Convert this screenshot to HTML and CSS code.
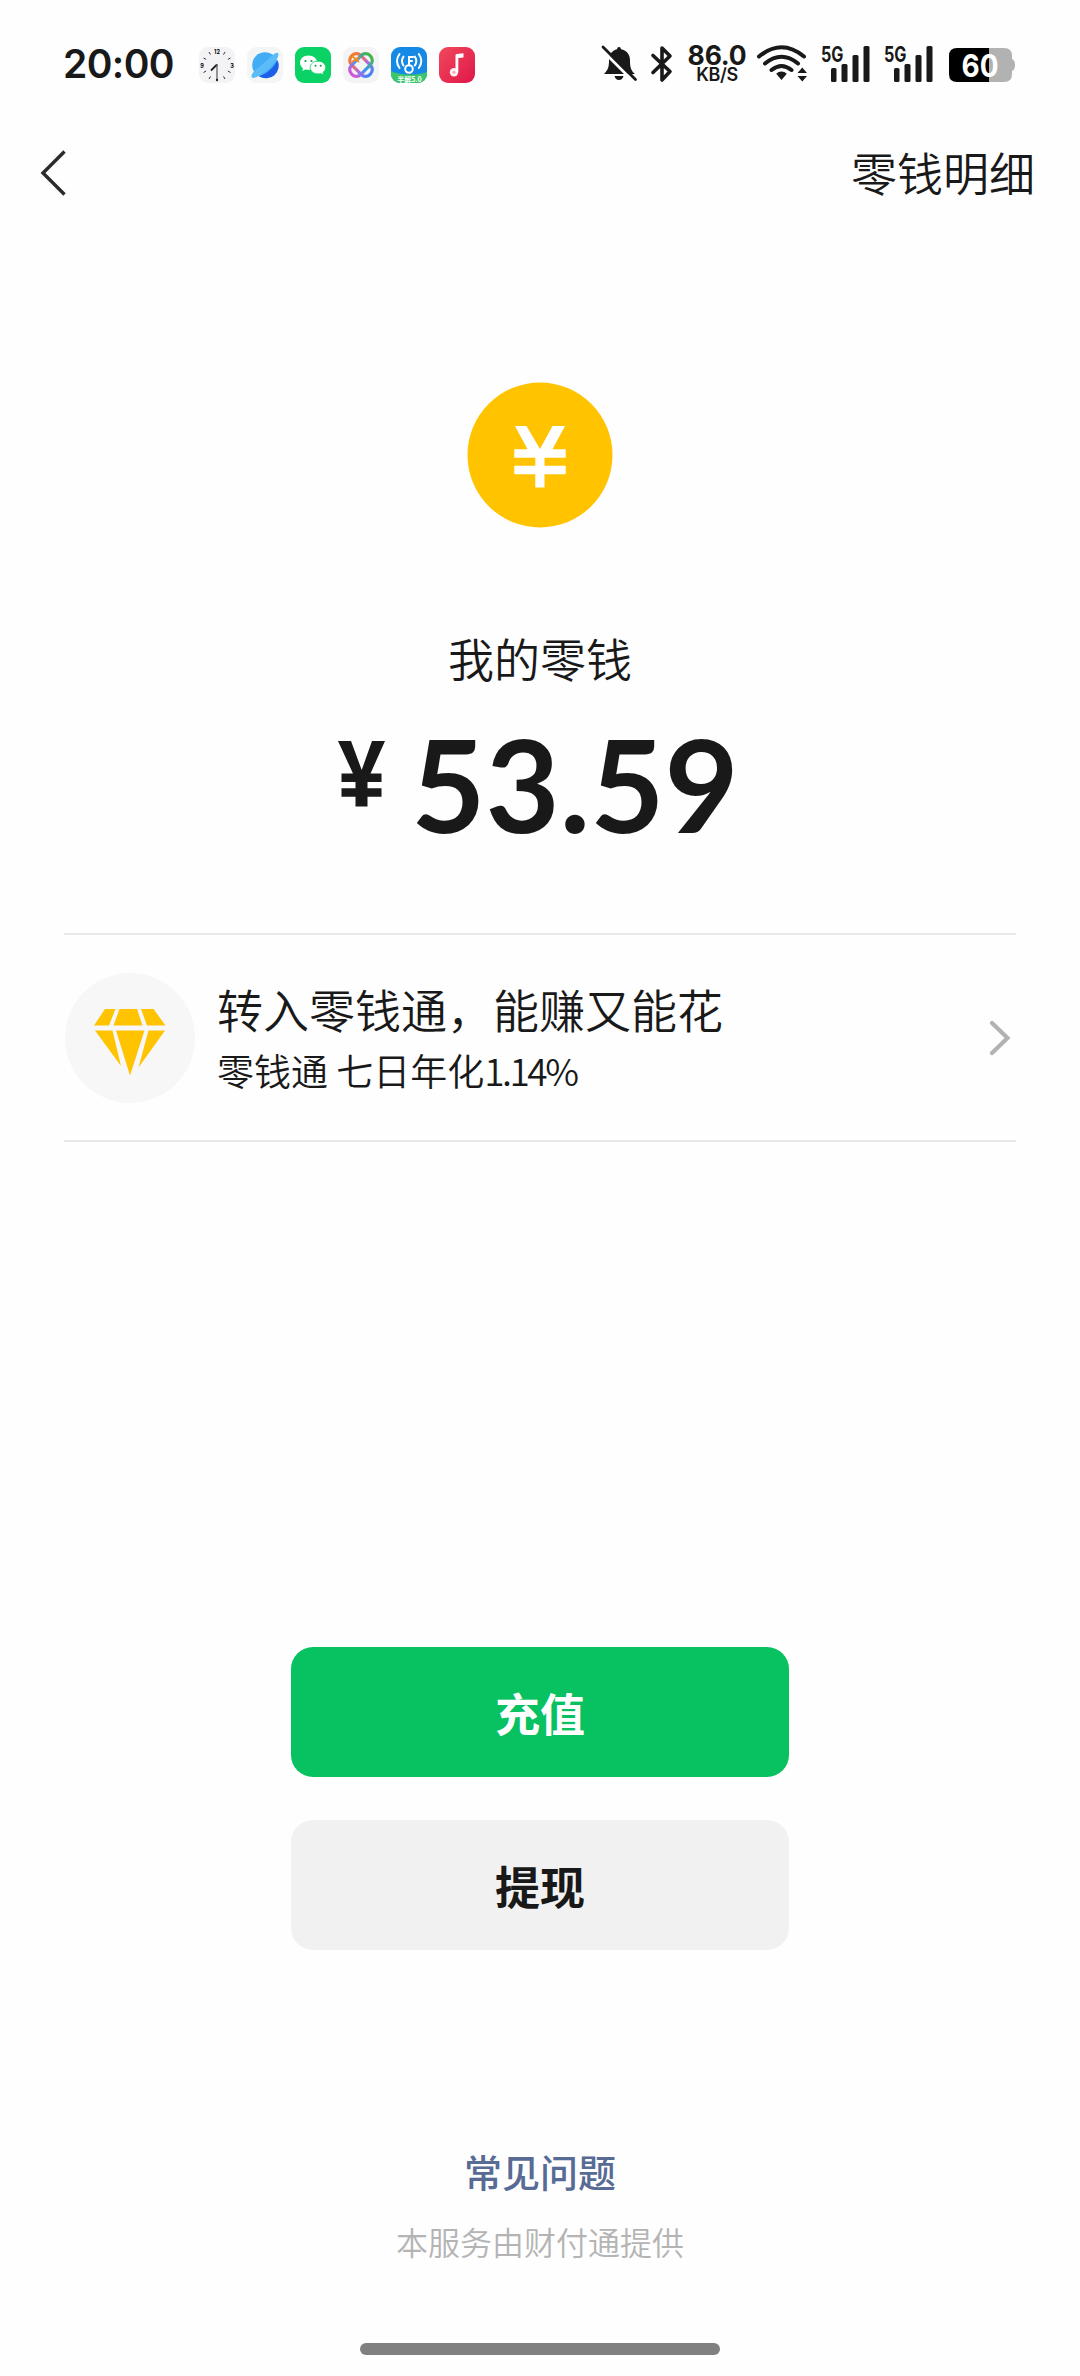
FILE: index.html
```html
<!DOCTYPE html>
<html lang="zh-CN">
<head>
<meta charset="utf-8">
<title>零钱</title>
<link rel="stylesheet" href="styles.css">
</head>
<body>
<div class="screen">
  <header class="status">
    <span class="time">20:00</span>
    <div class="apps">
      <svg class="app" viewBox="0 0 36 36">
        <rect width="36" height="36" rx="9" fill="#f3f3f6"/>
        <g stroke="#333" stroke-width="1"><path d="M10 5l1.500 2.600M26 5l-1.500 2.600M4.500 11l2.600 1.400M31.500 11l-2.600 1.400M4.500 25.500l2.600-1.500M31.500 25.500l-2.600-1.500M10 32l1.500-2.600M26 32l-1.500-2.600"/></g>
        <g class="dial"><text x="18" y="6.500">12</text><text x="33" y="20.500">3</text><text x="3" y="20.500">9</text></g>
        <path d="M18 17.500l-6 6" stroke="#222" stroke-width="1.800"/><path d="M18 17v16" stroke="#556" stroke-width="1.200"/><circle cx="18" cy="33" r="1.200" fill="#222"/>
      </svg>
      <svg class="app" viewBox="0 0 36 36">
        <rect width="36" height="36" rx="9" fill="#f4f5f5"/>
        <circle cx="18" cy="18" r="12.800" fill="#42adf5"/>
        <path d="M30.500 13A12.800 12.800 0 0 1 12 29.300C20 26.500 27 20.500 30.500 13z" fill="#1d5fe6"/>
        <path d="M26 8c3-3 5.500-3 5.500-.5 0 5-9 15.500-18 20.500C8 31 5 32 4.500 29.500 4.200 28 5.500 26 7.500 24z" fill="#5bbcf7"/>
      </svg>
      <svg class="app" viewBox="0 0 36 36">
        <rect width="36" height="36" rx="9" fill="#0bd264"/>
        <path d="M13.500 8.500c-5 0-8.500 3.200-8.500 7.200 0 2.200 1.200 4.200 3 5.500L7.300 24l3.200-1.600c1 .3 2 .4 3 .4 5 0 8.700-3.100 8.700-7.100s-3.700-7.200-8.700-7.200z" fill="#fff"/>
        <path d="M23 14.200c-4.600 0-7.900 2.800-7.900 6.300s3.300 6.400 7.900 6.400c.9 0 1.800-.1 2.600-.4l2.900 1.500-.6-2.600c1.700-1.200 2.800-2.900 2.800-4.900 0-3.500-3.200-6.300-7.700-6.300z" fill="#fff" stroke="#0bd264" stroke-width=".8"/>
        <g fill="#0b9d4e"><circle cx="10.500" cy="14" r="1.100"/><circle cx="16.500" cy="14" r="1.100"/><circle cx="20.500" cy="18.800" r="1"/><circle cx="25.700" cy="18.800" r="1"/></g>
      </svg>
      <svg class="app" viewBox="0 0 36 36">
        <defs><linearGradient id="knot" x1="0" y1="0" x2="1" y2="0"><stop offset="0" stop-color="#f07c2b"/><stop offset=".35" stop-color="#ef6a74"/><stop offset=".65" stop-color="#a56be8"/><stop offset="1" stop-color="#4285f4"/></linearGradient>
        <linearGradient id="loop" x1="0" y1="0" x2="1" y2="0"><stop offset="0" stop-color="#d755d7"/><stop offset=".5" stop-color="#3c98f0"/><stop offset="1" stop-color="#43b649"/></linearGradient></defs>
        <rect width="36" height="36" rx="9" fill="#f4f4f5"/>
        <g fill="none" stroke-width="3.200"><rect x="5" y="11.500" width="26" height="13" rx="6" transform="rotate(45 18 18)" stroke="url(#knot)"/><rect x="5" y="11.500" width="26" height="13" rx="6" transform="rotate(-45 18 18)" stroke="url(#loop)"/></g>
        <path d="M9 9l7 6M9 15l7-5" stroke="#f58b27" stroke-width="2"/>
      </svg>
      <svg class="app" viewBox="0 0 36 36">
        <defs><clipPath id="tile"><rect width="36" height="36" rx="9"/></clipPath></defs>
        <g clip-path="url(#tile)"><rect width="36" height="36" fill="#1489e6"/><path d="M0 24c7 4 25 5 36 1v11H0z" fill="#3bc66c"/></g>
        <g fill="none" stroke="#fff" stroke-width="2" stroke-linecap="round"><circle cx="18" cy="22" r="3.800"/><path d="M18 18V10h4M18 14h3M12.500 9.500q-3 4.500 0 9M8.500 7q-5 7 0 14M23.800 9.500q3 4.500 0 9M27.800 7q5 7 0 14"/></g>
        <text class="badge" x="18.500" y="34.500">半解5.0</text>
      </svg>
      <svg class="app" viewBox="0 0 36 36">
        <defs><linearGradient id="red" x1="0" y1="0" x2="1" y2="1"><stop offset="0" stop-color="#f1485a"/><stop offset="1" stop-color="#df174b"/></linearGradient></defs>
        <rect width="36" height="36" rx="9" fill="url(#red)"/>
        <circle cx="15" cy="25.300" r="4.200" fill="#fff0f2"/><path d="M16.500 25V8.200q0-1 1-1.300l7-.7v4.300l-5.200.6V25z" fill="#fff"/><circle cx="15" cy="25.300" r="1.500" fill="#f4a5b4"/>
      </svg>
    </div>
    <div class="system">
      <svg class="bell" viewBox="0 0 36 38" fill="#191919">
        <path d="M18 2q2 0 2 2.200c6 1.200 9 5.500 9 11.300 0 7 1 10 5 13.500H3c4-4 5-7 5-13.500C8 9.500 11 5.400 16 4.200Q16 2 18 2z"/><path d="M13.500 31h9q-1 4-4.500 4t-4.500-4z"/>
        <path d="M0 4l33 33" stroke="#fefefe" stroke-width="3"/><path d="M2 2l32.500 32.500" stroke="#191919" stroke-width="2.800" stroke-linecap="round"/>
      </svg>
      <svg class="bluetooth" viewBox="0 0 22 36"><path d="M2 9.500l17 16L11 34V2l8 8L2 26.500" fill="none" stroke="#191919" stroke-width="3.600" stroke-linejoin="round" stroke-linecap="round"/></svg>
      <div class="speed"><span class="rate">86.0</span><span class="unit">KB/S</span></div>
      <svg class="wifi" viewBox="0 0 50 38">
        <g fill="none" stroke="#191919" stroke-width="4" stroke-linecap="round"><path d="M2 11.500Q24.500-7 47 11.500M8 18.500Q24.500 5 41 18.500M14.500 25Q24.500 17 34.500 25"/></g>
        <path d="M24.500 26.500q3 0 5.300 2.200L24.500 35l-5.300-6.300q2.300-2.200 5.300-2.200z" fill="#191919"/><path d="M40.500 28h9.500l-4.700-5.500zM40.500 31h9.500l-4.700 5.500z" fill="#191919"/>
      </svg>
      <svg class="signal" viewBox="0 0 49 38"><text class="net" x="0" y="17" textLength="22.500" lengthAdjust="spacingAndGlyphs">5G</text><g fill="#191919"><rect x="10" y="23" width="5.500" height="14" rx="1.500"/><rect x="20.500" y="19" width="6" height="18" rx="1.500"/><rect x="31.500" y="10" width="6" height="27" rx="1.500"/><rect x="42.500" y="1" width="6" height="36" rx="1.500"/></g></svg>
      <svg class="signal" viewBox="0 0 49 38"><text class="net" x="0" y="17" textLength="22.500" lengthAdjust="spacingAndGlyphs">5G</text><g fill="#191919"><rect x="10" y="23" width="5.500" height="14" rx="1.500"/><rect x="20.500" y="19" width="6" height="18" rx="1.500"/><rect x="31.500" y="10" width="6" height="27" rx="1.500"/><rect x="42.500" y="1" width="6" height="36" rx="1.500"/></g></svg>
      <svg class="battery" viewBox="0 0 67 34"><path d="M40 0h15q8 0 8 8v3q3 1 3 6t-3 6v3q0 8-8 8H40z" fill="#b2b2b2"/><path d="M8 0h32v34H8q-8 0-8-8V8q0-8 8-8z" fill="#000"/><text class="level" x="12.500" y="28.500" textLength="37" lengthAdjust="spacingAndGlyphs">60</text></svg>
    </div>
  </header>

  <nav class="nav">
    <svg class="back" viewBox="0 0 28 48"><path d="M25.500 2.500L4 24l21.500 21.500" fill="none" stroke="#2b2b2b" stroke-width="3.400"/></svg>
    <a class="detail">零钱明细</a>
  </nav>

  <main class="main">
    <svg class="coin" viewBox="0 0 146 146"><circle cx="73" cy="73" r="72.500" fill="#ffc300"/><path d="M48 44h11.500L73 67l12.500-23H98L85.500 67.300h13.200v8.500H77.500v8h21.200v8.500H77.500v13.200h-9.200V92.300h-21v-8.500h21v-8h-21v-8.500h13.200z" fill="#fff"/></svg>
    <h1 class="label">我的零钱</h1>
    <div class="amount">
      <svg class="yen" viewBox="0 0 47 66" fill="#191919"><path d="M0 0h13l10.700 29L34 0h13L32.500 32.500H43.500v8.500H29.500v6.300h14v8.500h-14V65.500h-12v-9.700h-14v-8.500h14V41h-14v-8.500h11.500z"/></svg>
      <span class="value">53.59</span>
    </div>
    <section class="promo">
      <div class="gem-disc"><svg class="gem" viewBox="0 0 72 68" fill="#ffc300"><path d="M11 1h10.500L15 17.500H0zM25.500 1h17.500l5.500 16.500H19.500zM47 1h12.500L71.500 17.500H53zM1 22.500h17.500L27 58zM22 22.500h28.500L36 67.500zM54.500 22.500H71L44.500 59.500z"/></svg></div>
      <div class="promo-text">
        <div class="promo-title">转入零钱通，能赚又能花</div>
        <div class="promo-sub">零钱通 七日年化<span class="pct">1.14%</span></div>
      </div>
      <svg class="arrow" viewBox="0 0 24 38"><path d="M4 4l15.500 15L4 34" fill="none" stroke="#b2b2b2" stroke-width="4.200" stroke-linecap="round"/></svg>
    </section>
    <div class="actions">
      <button class="btn primary">充值</button>
      <button class="btn">提现</button>
    </div>
    <footer class="footer">
      <a class="faq">常见问题</a>
      <p class="provider">本服务由财付通提供</p>
    </footer>
  </main>
  <div class="home-bar"></div>
</div>
</body>
</html>
```
FILE: styles.css
```css
* { box-sizing: border-box; margin: 0; padding: 0; }
body {
  background: #fefefe;
  color: #191919;
  font-family: "Noto Sans CJK SC", sans-serif;
  font-weight: 350;
}
svg { display: block; flex: none; overflow: visible; }
.screen {
  width: 1080px;
  height: 2376px;
  display: flex;
  flex-direction: column;
  align-items: center;
  overflow: hidden;
}
.status {
  width: 100%;
  height: 128px;
  padding: 45px 64px 0 63px;
  display: flex;
  align-items: flex-start;
}
.time {
  width: 136px;
  font: 600 39px/38px "Inter", sans-serif;
  letter-spacing: -0.6px;
}
.apps { display: flex; gap: 12px; padding-top: 2px; }
.app { width: 36px; height: 36px; }
.dial { font: 700 5.500px "Inter", sans-serif; text-anchor: middle; }
.badge { font: 700 7px "Noto Sans CJK SC", sans-serif; fill: #fff; text-anchor: middle; }
.system { display: flex; margin-left: auto; }
.bell { width: 36px; height: 38px; margin-right: 14px; }
.bluetooth { width: 22px; height: 36px; margin: 1px 14px 0 0; }
.speed {
  width: 60px;
  margin-right: 10px;
  display: flex;
  flex-direction: column;
  align-items: center;
  font-family: "Inter", sans-serif;
}
.rate { font-size: 26.500px; font-weight: 700; line-height: 21px; letter-spacing: -0.2px; }
.unit { font-size: 18px; font-weight: 600; line-height: 17px; letter-spacing: -0.4px; }
.wifi { width: 50px; height: 38px; margin-right: 14px; }
.signal { width: 49px; height: 38px; margin-right: 14px; }
.signal + .battery { margin-left: 2px; }
.battery { width: 67px; height: 34px; margin-top: 3px; }
.net { font: 700 21.500px "Inter", sans-serif; fill: #191919; }
.level { font: 700 31px "Inter", sans-serif; fill: #fff; }

.nav {
  width: 100%;
  height: 90px;
  padding: 0 45px 0 39px;
  display: flex;
  align-items: center;
  justify-content: space-between;
}
.back { width: 28px; height: 48px; }
.detail { font-size: 46px; line-height: 64px; margin-top: -5px; }

.main {
  width: 952px;
  display: flex;
  flex-direction: column;
  align-items: center;
}
.coin { width: 146px; height: 146px; margin-top: 164px; }
.label {
  margin-top: 97px;
  font-size: 46px;
  font-weight: 350;
  line-height: 64px;
}
.amount { display: flex; align-items: flex-start; margin: 52px 0 0 -3px; height: 140px; }
.yen { width: 47px; height: 66px; margin-right: 26px; }
.value { font: 700 128px/128px "Lato", sans-serif; margin-top: -21px; }

.promo {
  width: 952px;
  height: 209px;
  margin-top: 52px;
  padding: 0 4px 0 1px;
  display: flex;
  align-items: center;
  border-top: 2px solid #e9e9e9;
  border-bottom: 2px solid #e9e9e9;
}
.gem-disc {
  width: 130px;
  height: 130px;
  border-radius: 50%;
  background: #f7f7f7;
  display: flex;
  align-items: center;
  justify-content: center;
}
.gem { width: 72px; height: 68px; margin-top: 8px; }
.promo-text { flex: 1; margin-left: 22px; }
.promo-title { font-size: 46px; line-height: 64px; }
.promo-sub { font-size: 37px; line-height: 60px; }
.pct { letter-spacing: -2.500px; }
.arrow { width: 24px; height: 38px; }

.actions { display: flex; flex-direction: column; gap: 43px; margin-top: 505px; }
.btn {
  width: 498px;
  height: 130px;
  padding-top: 2px;
  border: 0;
  border-radius: 22px;
  background: #f1f1f1;
  color: #191919;
  font: 700 45px/64px "Noto Sans CJK SC", sans-serif;
}
.primary { background: #08c160; color: #fff; }
.footer { display: flex; flex-direction: column; align-items: center; margin-top: 193px; }
.faq { font-size: 38px; font-weight: 500; line-height: 56px; color: #576b95; }
.provider { margin-top: 19px; font-size: 32px; line-height: 46px; color: #b4b4b4; }
.home-bar {
  width: 360px;
  height: 12px;
  margin: auto 0 21px;
  border-radius: 6px;
  background: #808080;
}
```
